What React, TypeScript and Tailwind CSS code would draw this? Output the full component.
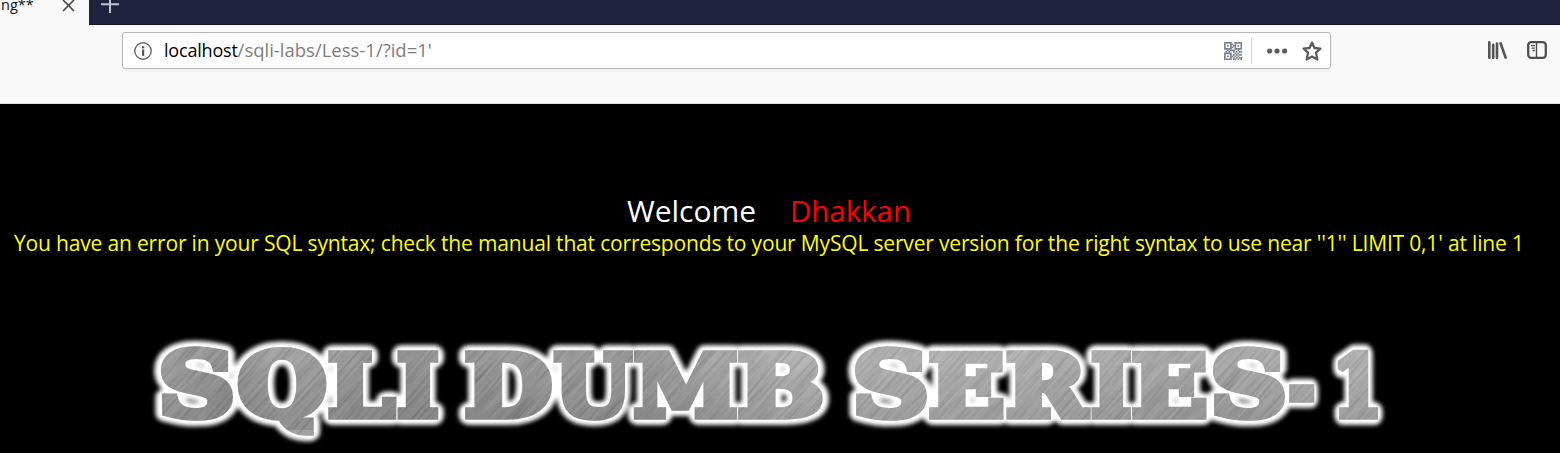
type Glyph = { ch: string; left: number; right: number; inkLeft: number; inkRight: number; grow?: number };

const GLYPHS: Glyph[] = [
  { ch: "S", left: 161, right: 233, inkLeft: 6, inkRight: 67, grow: 1.04 },
  { ch: "Q", left: 238, right: 326, inkLeft: 4, inkRight: 83, grow: 1.03 },
  { ch: "L", left: 328, right: 397, inkLeft: 4, inkRight: 69 },
  { ch: "I", left: 397, right: 439, inkLeft: 4, inkRight: 43 },
  { ch: "D", left: 465, right: 552, inkLeft: 4, inkRight: 83 },
  { ch: "U", left: 553, right: 634, inkLeft: 3, inkRight: 86 },
  { ch: "M", left: 634, right: 738, inkLeft: 4, inkRight: 106 },
  { ch: "B", left: 738, right: 822, inkLeft: 4, inkRight: 79 },
  { ch: "S", left: 855, right: 927, inkLeft: 6, inkRight: 67, grow: 1.04 },
  { ch: "E", left: 929, right: 1004, inkLeft: 4, inkRight: 72 },
  { ch: "R", left: 1006, right: 1091, inkLeft: 4, inkRight: 84 },
  { ch: "I", left: 1091, right: 1132, inkLeft: 4, inkRight: 43 },
  { ch: "E", left: 1132, right: 1207, inkLeft: 4, inkRight: 72 },
  { ch: "S", left: 1213, right: 1285, inkLeft: 6, inkRight: 67, grow: 1.04 },
  { ch: "-", left: 1288, right: 1316, inkLeft: 5, inkRight: 37 },
  { ch: "1", left: 1337, right: 1379, inkLeft: 12, inkRight: 60 },
];

const SIZE = 85;
const PAD = 3.8;

function Letter({ g, stroke, color }: { g: Glyph; stroke: number; color: string }) {
  const unit = SIZE / 100;
  const sx = (g.right - g.left - PAD * 2) / ((g.inkRight - g.inkLeft) * unit);
  const tx = g.left + PAD - g.inkLeft * unit * sx;
  return (
    <text
      transform={`translate(${tx} 415.5) scale(${sx} ${g.grow ?? 1})`}
      fontFamily="DejaVu Serif, serif"
      fontWeight="bold"
      fontSize={SIZE}
      fill={color}
      stroke={color}
      strokeWidth={stroke}
      strokeLinejoin={stroke > 9 ? "round" : "miter"}
      strokeMiterlimit={2}
    >
      {g.ch}
    </text>
  );
}

function Wordmark() {
  return (
    <svg className="block" width="1560" height="133" viewBox="0 320 1560 133">
      <defs>
        <linearGradient id="steel" gradientUnits="userSpaceOnUse" x1="160" y1="345" x2="1380" y2="420">
          <stop offset="0" stopColor="#969696" />
          <stop offset="0.06" stopColor="#868686" />
          <stop offset="0.1" stopColor="#989898" />
          <stop offset="0.2" stopColor="#868686" />
          <stop offset="0.28" stopColor="#8e8e8e" />
          <stop offset="0.4" stopColor="#8e8e8e" />
          <stop offset="0.52" stopColor="#aaaaaa" />
          <stop offset="0.7" stopColor="#aaaaaa" />
          <stop offset="0.85" stopColor="#9e9e9e" />
          <stop offset="1" stopColor="#acacac" />
        </linearGradient>
        <linearGradient id="shade" x1="0" y1="0" x2="0" y2="1">
          <stop offset="0.2" stopColor="#000" stopOpacity="0" />
          <stop offset="0.85" stopColor="#000" stopOpacity="0.1" />
        </linearGradient>
        <filter id="brush" x="0" y="0" width="1" height="1">
          <feTurbulence type="fractalNoise" baseFrequency="0.018 0.4" numOctaves="2" seed="4" />
          <feColorMatrix values="1.3 0 0 0 -0.15  1.3 0 0 0 -0.15  1.3 0 0 0 -0.15  0 0 0 0 0.22" />
        </filter>
        <filter id="soft" x="-5%" y="-30%" width="110%" height="160%">
          <feGaussianBlur stdDeviation="2" />
        </filter>
        <mask id="letters" maskUnits="userSpaceOnUse" x="140" y="330" width="1260" height="123">
          {GLYPHS.map((g, i) => (
            <g key={i}>
              <Letter g={g} stroke={9} color="#000" />
              <Letter g={g} stroke={7.4} color="#fff" />
            </g>
          ))}
        </mask>
      </defs>
      <g filter="url(#soft)">
        {GLYPHS.map((g, i) => (
          <Letter key={i} g={g} stroke={18} color="#fff" />
        ))}
      </g>
      {GLYPHS.map((g, i) => (
        <Letter key={i} g={g} stroke={10.5} color="#fff" />
      ))}
      <g mask="url(#letters)">
        <rect x="140" y="330" width="1260" height="123" fill="url(#steel)" />
        <g transform="rotate(-48 770 390)">
          <rect x="100" y="-300" width="1340" height="1380" filter="url(#brush)" />
        </g>
        <rect x="140" y="340" width="1260" height="90" fill="url(#shade)" />
      </g>
    </svg>
  );
}

function InfoIcon() {
  return (
    <svg width="18" height="18" viewBox="0 0 18 18" fill="none">
      <circle cx="9" cy="9" r="8.2" stroke="#6b6b6b" strokeWidth="1.4" />
      <rect x="8" y="4.2" width="2.2" height="2.2" fill="#555" />
      <rect x="8" y="7.6" width="2.2" height="6.2" fill="#555" />
    </svg>
  );
}

const QR = [
  "111110011111",
  "100011010001",
  "101010110101",
  "100011010001",
  "111110011111",
  "001011100100",
  "010100101011",
  "111110010100",
  "100010101011",
  "101011010100",
  "100010101011",
  "111110110101",
];

function QrIcon() {
  return (
    <svg width="18" height="18" viewBox="0 0 12 12" fill="#727c8c">
      {QR.flatMap((row, y) => [...row].map((c, x) => (c === "1" ? <rect key={`${x}-${y}`} x={x} y={y} width="1.12" height="1.12" /> : null)))}
    </svg>
  );
}

function DotsIcon() {
  return (
    <svg width="20" height="6" viewBox="0 0 20 6" fill="#5c5c5c">
      <circle cx="2.7" cy="3" r="2.6" />
      <circle cx="10" cy="3" r="2.6" />
      <circle cx="17.6" cy="3" r="2.6" />
    </svg>
  );
}

function StarIcon() {
  return (
    <svg width="20" height="20" viewBox="0 0 20 20" fill="none" stroke="#5c5c5c" strokeWidth="2.3" strokeLinejoin="round">
      <path d="M10 1.6 12.5 7l5.9.6-4.4 4 1.3 6.8L10 15.6l-5.3 2.8L6 11.6l-4.4-4L7.5 7z" />
    </svg>
  );
}

function LibraryIcon() {
  return (
    <svg width="20" height="20" viewBox="0 0 20 20" fill="none" stroke="#555" strokeWidth="2.6" strokeLinecap="round">
      <path d="M2.3 2.2v15.600M6.200 4.800v13M10 3.500v14.300M13.600 3.300l5 14.300" />
    </svg>
  );
}

function SidebarIcon() {
  return (
    <svg width="20" height="18" viewBox="0 0 20 18" fill="none" stroke="#4f4f4f">
      <rect x="1.2" y="1.2" width="17.6" height="15.6" rx="3" strokeWidth="2.3" />
      <path d="M9.5 2v14" strokeWidth="1.4" />
      <path d="M4 4.600h4M4.600 7.200h3.200M5.400 9.700h2.400" strokeWidth="1.2" />
    </svg>
  );
}

export default function App() {
  return (
    <div className="h-[453px] w-[1560px] overflow-hidden bg-black font-['Open_Sans',sans-serif]">
      <div className="flex h-[25px] bg-[#202340]">
        <div className="flex w-[89px] justify-between bg-[#f9f9fa] pr-[14px]">
          <span className="-mt-[6px] h-[22px] pl-px text-[14.5px] leading-[22px] text-[#101010]">ng**</span>
          <svg className="-mt-px" width="13" height="13" viewBox="0 0 13 13" fill="none" stroke="#4a4a4f" strokeWidth="1.7">
            <path d="M1 1l11 11M12 1L1 12" />
          </svg>
        </div>
        <div className="flex grow border-b border-[#14142c] pl-3">
          <svg width="18" height="14" viewBox="0 0 18 14" fill="none" stroke="#c2c2cc" strokeWidth="2">
            <path d="M0 4.300h18M9 -4v17" />
          </svg>
        </div>
      </div>

      <div className="flex h-[79px] items-start border-b border-[#dfe6df] bg-[#f9f9fa] pl-[122px] pt-[7px]">
        <div className="flex h-[37px] w-[1209px] items-center rounded-[3px] border border-[#b8b8b8] bg-white pl-[11px] pr-2 shadow-[0_1px_4px_rgba(0,0,0,0.06)]">
          <InfoIcon />
          <span className="-mt-px ml-3 flex grow items-baseline whitespace-pre leading-6">
            <span className="text-[18px] tracking-[-0.2px] text-black">localhost</span>
            <span className="text-[18.5px] text-[#7d7d7d]">/sqli-labs/Less-1/?id=1'</span>
          </span>
          <QrIcon />
          <span className="ml-[9px] h-[26px] w-px bg-[#d8d8db]" />
          <span className="ml-[15px]"><DotsIcon /></span>
          <span className="ml-[15px]"><StarIcon /></span>
        </div>
        <div className="ml-[156px] mt-2 flex items-center gap-5">
          <LibraryIcon />
          <SidebarIcon />
        </div>
      </div>

      <div className="flex h-[216px] flex-col whitespace-pre pt-[87px]">
        <div className="flex h-10 pl-[627px] text-[30px] leading-10">
          <span className="w-[163px] text-white">Welcome</span>
          <span className="text-[29.4px] text-[#ff0000]">Dhakkan</span>
        </div>
        <div className="-mt-[3px] pl-[14px] text-[21px] leading-[30px] tracking-[-0.168px] text-[#ffff00]">
          You have an error in your SQL syntax; check the manual that corresponds to your MySQL server version for the right syntax to use near ''1'' LIMIT 0,1' at line 1
        </div>
      </div>

      <Wordmark />
    </div>
  );
}
